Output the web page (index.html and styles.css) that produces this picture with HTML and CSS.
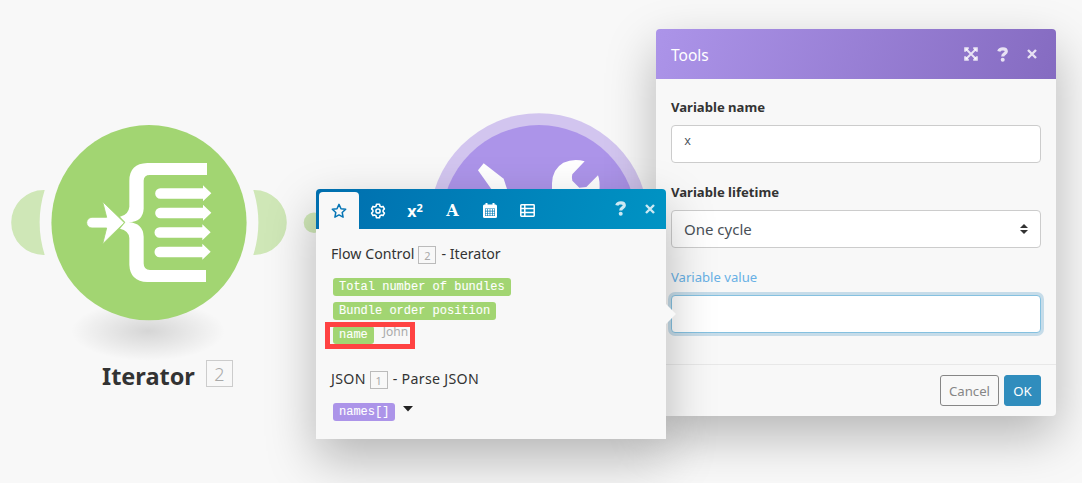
FILE: index.html
```html
<!DOCTYPE html>
<html lang="en">
<head>
<meta charset="utf-8">
<title>Scenario editor</title>
<link rel="stylesheet" href="styles.css">
</head>
<body>
<main class="canvas">
  <svg class="nodes" width="660" height="483" viewBox="0 0 660 483">
    <defs>
      <radialGradient id="shade">
        <stop offset="0" stop-color="#000" stop-opacity=".14"/>
        <stop offset=".5" stop-color="#000" stop-opacity=".07"/>
        <stop offset="1" stop-color="#000" stop-opacity="0"/>
      </radialGradient>
    </defs>
    <ellipse cx="148" cy="331" rx="77" ry="30" fill="url(#shade)"/>
    <path d="M44.700 190H43.700A32.500 32.500 0 0 0 43.700 255H44.700A109 109 0 0 1 44.700 190Z" fill="#cfe7b7"/>
    <path d="M253.300 190H254.300A32.500 32.500 0 0 1 254.300 255H253.300A109 109 0 0 0 253.300 190Z" fill="#cfe7b7"/>
    <circle cx="314" cy="222.700" r="10.300" fill="#cfe7b7"/>
    <circle cx="149" cy="222.700" r="97.600" fill="#a2d572"/>
    <g transform="translate(0 110) scale(.33333)" fill="#fff">
      <path d="M621 159H442Q388 161 388 212V290Q386 314 360 320L376 337L360 356Q386 361 388 384V464Q390 514 442 516H618V480H450Q431 480 431 460V380Q429 339 386 337Q429 335 431 296V212Q431 195 450 195H621Z"/>
      <path d="M276 322H320L308 275L373 338L308 402L320 354H276A16 16 0 0 1 276 322Z" stroke="#a2d572" stroke-width="2.500"/>
      <path id="arw" d="M481 235H609V226L634 250L609 274V266H481A15.500 15.500 0 0 1 481 235Z"/>
      <use href="#arw" y="58.500"/>
      <use href="#arw" x="-2" y="117"/>
      <use href="#arw" x="-2" y="175.500"/>
    </g>
    <circle cx="539" cy="222.700" r="109.500" fill="#d2c5ef"/>
    <circle cx="539" cy="222.700" r="97.600" fill="#ac94e9"/>
    <g transform="translate(300 100) scale(.33333)" fill="#fff">
      <path d="M551 190L611 236L622 270H576L534 211Z"/>
      <path d="M854 184L817 223Q814 232 817 242L838 263L859 261L894 226Q901 243 898 275H756V250Q757 207 790 188Q822 174 854 184Z"/>
    </g>
  </svg>
  <div class="caption"><span class="caption-name">Iterator</span><span class="caption-id">2</span></div>

  <section class="dialog">
    <header class="dialog-head">
      <h1 class="dialog-title">Tools</h1>
      <svg class="ic-expand" width="14" height="14" viewBox="0 0 14 14"><path d="M2 2L12 12M12 2L2 12" stroke="currentColor" stroke-width="1.900"/><path d="M.2 4.800V.2H4.800V1.700L1.700 4.800ZM9.200 .2H13.800V4.800H12.300L9.200 1.700ZM.2 9.200H1.700L4.800 12.300V13.800H.2ZM13.800 9.200V13.800H9.200V12.300L12.300 9.200Z" fill="currentColor"/></svg>
      <svg class="ic-help" width="12" height="15" viewBox="0 0 12 15"><path d="M1.800 4.400C2.800 1 9.300 .9 9.300 4.500C9.300 6.800 5.700 6.500 5.700 9.600" fill="none" stroke="currentColor" stroke-width="3.200"/><circle cx="5.700" cy="12.700" r="2" fill="currentColor"/></svg>
      <svg class="ic-close" width="10" height="10" viewBox="0 0 10 10"><path d="M1 1L9 9M9 1L1 9" stroke="currentColor" stroke-width="2.400"/></svg>
    </header>
    <div class="dialog-body">
      <label class="label">Variable name</label>
      <div class="field mono">x</div>
      <label class="label">Variable lifetime</label>
      <div class="field select"><span>One cycle</span><svg width="8" height="10" viewBox="0 0 8 10"><path d="M0 4L4 0L8 4ZM0 6L4 10L8 6Z" fill="#333"/></svg></div>
      <label class="label active">Variable value</label>
      <div class="field focus"></div>
    </div>
    <footer class="dialog-foot">
      <button class="btn cancel">Cancel</button>
      <button class="btn ok">OK</button>
    </footer>
  </section>

  <section class="picker">
    <header class="tabs">
      <div class="tab selected"><svg width="16" height="16" viewBox="0 0 16 16"><path d="M8 1.400L10 5.700L14.700 6.200L11.200 9.500L12.100 14.200L8 11.900L3.900 14.200L4.800 9.500L1.300 6.200L6 5.700Z" fill="none" stroke="currentColor" stroke-width="1.500" stroke-linejoin="round"/></svg></div>
      <div class="tab"><svg width="16" height="16" viewBox="0 0 16 16"><path d="M6.500 1.300H9.500L10 3.200L11.200 3.900L13 3.400L14.400 6L13.100 7.300V8.700L14.400 10L13 12.600L11.200 12.100L10 12.800L9.500 14.700H6.500L6 12.800L4.800 12.100L3 12.600L1.600 10L2.900 8.700V7.300L1.600 6L3 3.400L4.800 3.900L6 3.200Z" fill="none" stroke="currentColor" stroke-width="1.600" stroke-linejoin="round"/><circle cx="8" cy="8" r="2.100" fill="none" stroke="currentColor" stroke-width="1.500"/></svg></div>
      <div class="tab math">x<sup>2</sup></div>
      <div class="tab letter">A</div>
      <div class="tab"><svg width="14" height="15" viewBox="0 0 14 15"><path d="M3.500 0V3M10.500 0V3" stroke="currentColor" stroke-width="2"/><rect y="1.500" width="14" height="13.500" rx="1.500" fill="currentColor"/><path d="M2 5.500H12V13H2Z" fill="#007cb7"/><path d="M2.600 6.800H11.400M2.600 9.300H11.400M2.600 11.700H11.400" stroke="currentColor" stroke-width="1.700" stroke-dasharray="1.700 .67"/></svg></div>
      <div class="tab last"><svg width="15" height="13" viewBox="0 0 15 13"><path d="M1.500 .8H13.500Q14.200 .8 14.200 1.500V11.500Q14.200 12.200 13.500 12.200H1.500Q.8 12.200 .8 11.500V1.500Q.8 .8 1.500 .8ZM1 4.600H14M1 8.400H14M4.800 1V12" fill="none" stroke="currentColor" stroke-width="1.500"/></svg></div>
      <svg class="ic-help" width="12" height="15" viewBox="0 0 12 15"><path d="M1.800 4.400C2.800 1 9.300 .9 9.300 4.500C9.300 6.800 5.700 6.500 5.700 9.600" fill="none" stroke="currentColor" stroke-width="3.200"/><circle cx="5.700" cy="12.700" r="2" fill="currentColor"/></svg>
      <svg class="ic-close" width="10" height="10" viewBox="0 0 10 10"><path d="M1 1L9 9M9 1L1 9" stroke="currentColor" stroke-width="2.400"/></svg>
    </header>
    <div class="picker-body">
      <h2 class="group flow"><span>Flow Control</span><span class="num">2</span><span>- Iterator</span></h2>
      <div class="row"><span class="pill">Total number of bundles</span></div>
      <div class="row"><span class="pill">Bundle order position</span></div>
      <div class="row"><span class="pill">name</span><span class="sample">John</span><span class="highlight"></span></div>
      <h2 class="group json"><span>JSON</span><span class="num">1</span><span>- Parse JSON</span></h2>
      <div class="row"><span class="pill violet">names[]</span><svg class="caret" width="10" height="6" viewBox="0 0 10 6"><path d="M0 0H10L5 5.500Z" fill="#222"/></svg></div>
    </div>
    <span class="pointer"></span>
  </section>
</main>
</body>
</html>
```
FILE: styles.css
```css
* { box-sizing: border-box; }
body { margin: 0; background: #f8f8f8; color: #333; font-family: "Noto Sans", "Open Sans", sans-serif; }
svg { display: block; flex: none; }
.canvas { position: relative; width: 1082px; height: 483px; overflow: hidden; }
.nodes { position: absolute; left: 0; top: 0; }
.caption { position: absolute; left: 102px; top: 360px; display: flex; align-items: flex-start; }
.caption-name { width: 104px; font-size: 23.5px; line-height: 32px; font-weight: 700; }
.caption-id { width: 27px; height: 27px; border: 1.500px solid #ccc; font-size: 18px; line-height: 26px; text-align: center; color: #aaa; font-weight: 300; }

.dialog { position: absolute; left: 656px; top: 29px; width: 400px; height: 387px; display: flex; flex-direction: column; border-radius: 4px; background: #f8f8f8; box-shadow: 0 20px 50px rgba(0, 0, 0, .27); }
.dialog-head { display: flex; height: 50px; padding: 0 19px 0 15px; border-radius: 4px 4px 0 0; background: linear-gradient(110deg, #ac94e9, #856bc1); color: rgba(255, 255, 255, .8); }
.dialog-title { flex: 1; margin: 1px 0 0; color: #fff; font-size: 15.500px; line-height: 50px; font-weight: 400; }
.ic-expand { margin: 18px 19px 0 0; }
.ic-help { margin: 18px 18px 0 0; }
.ic-close { margin-top: 20px; }
.dialog-body { display: flex; flex-direction: column; flex: 1; padding: 18px 15px 0; }
.label { height: 28px; font-size: 13.100px; line-height: 20px; font-weight: 700; }
.label.active { color: #68b0e5; font-weight: 400; }
.field { height: 38px; margin-bottom: 19px; padding: 0 12px; border: 1px solid #ccc; border-radius: 4px; background: #fff; color: #495057; }
.mono { font: 12px/32px "Liberation Mono", monospace; }
.select { display: flex; align-items: center; justify-content: space-between; font-size: 15px; }
.focus { border-color: #85c1e0; box-shadow: 0 0 0 3px #c6dce9; }
.dialog-foot { display: flex; justify-content: flex-end; gap: 5px; height: 52px; padding: 10px 15px 0; border-top: 1px solid #e8e8e8; }
.btn { height: 31px; padding: 1px 0 0; border: 1px solid #868686; border-radius: 3px; background: transparent; font: 13.200px/29px "Noto Sans", sans-serif; color: #868686; }
.cancel { width: 59px; }
.ok { width: 37px; border-color: #308dbd; background: #308dbd; color: #fff; }

.picker { position: absolute; left: 316px; top: 189px; width: 350px; height: 250px; background: #f8f8f8; border-radius: 4px 4px 0 0; box-shadow: 0 20px 50px rgba(0, 0, 0, .27); }
.tabs { display: flex; height: 40px; padding: 0 11px 0 3px; border-radius: 4px 4px 0 0; background: linear-gradient(110deg, #006eae, #0094c4); color: #fff; }
.tab { display: flex; align-items: center; justify-content: center; width: 37px; height: 37px; margin-top: 3px; }
.tab.selected { width: 40px; border-radius: 4px 4px 0 0; background: #f8f8f8; color: #0675b5; }
.math { width: 38px; font-size: 16px; font-weight: 700; }
.math sup { font-size: 11px; margin-top: -7px; }
.letter { font: 700 16px "DejaVu Serif", serif; }
.last { width: 38px; }
.tabs .ic-help { margin: 12px 18px 0 auto; color: rgba(255, 255, 255, .8); }
.tabs .ic-close { margin-top: 15px; color: rgba(255, 255, 255, .8); }
.picker-body { padding: 12px 15px; }
.group { display: flex; align-items: center; height: 24px; margin: 0; font-size: 14.200px; font-weight: 400; white-space: nowrap; }
.num { width: 18px; height: 18px; margin: 3px 5px 0 4px; border: 1px solid #bbb; color: #aaa; font: 11px/17px "Noto Sans", sans-serif; text-align: center; }
.flow { margin-bottom: 13px; }
.json { margin: 16px 0 13px; letter-spacing: .3px; }
.json .num { letter-spacing: 0; }
.row { position: relative; display: flex; align-items: flex-start; height: 24px; padding-left: 2px; }
.pill { height: 18px; padding: 0 6px; border-radius: 3px; background: #a2d572; color: #fff; font: 12px/18px "Liberation Mono", monospace; white-space: nowrap; -webkit-text-stroke: .1px #fff; }
.violet { background: #ac94e9; }
.sample { margin: -3px 0 0 9px; font-size: 12px; line-height: 18px; color: #aaa; }
.highlight { position: absolute; left: -6px; top: -4px; width: 90px; height: 27px; border: 5px solid #ff4242; }
.caret { margin: 3px 0 0 8px; }
.pointer { position: absolute; left: 350px; top: 115px; border: solid transparent; border-width: 10px 0 10px 10px; border-left-color: #f8f8f8; }
```
